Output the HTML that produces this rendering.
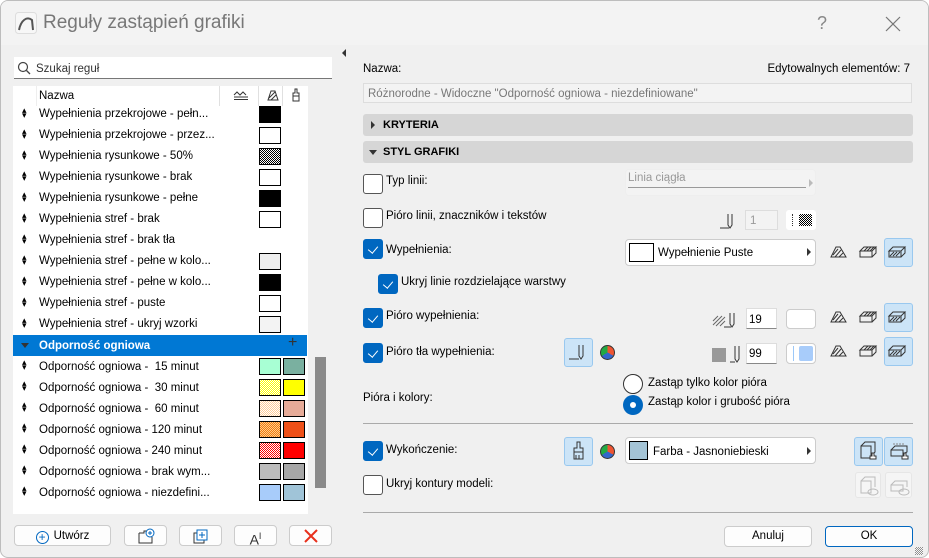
<!DOCTYPE html>
<html><head><meta charset="utf-8"><style>
*{box-sizing:border-box;margin:0;padding:0}
body{width:929px;height:558px;background:#fff;font-family:"Liberation Sans",sans-serif;font-size:11.5px;color:#000;position:relative;overflow:hidden}
.win{position:absolute;left:0;top:0;width:929px;height:558px;border:1px solid #bdbdbd;border-radius:8px;background:#f0f0f0;overflow:hidden}
.tb{position:absolute;left:0;top:0;width:929px;height:44px;background:#f3f3f3}
.a{position:absolute}
.t{position:absolute;white-space:nowrap;line-height:14px}
.sw{position:absolute;width:22px;height:17px;border:1px solid #000}
.cb{position:absolute;width:20px;height:20px;border:1px solid #555;border-radius:3px;background:#fff}
.cb.on{background:#0067c0;border-color:#0067c0}
.cb.on::after{content:"";position:absolute;left:6px;top:4px;width:5px;height:8px;border:solid #fff;border-width:0 1.2px 1.2px 0;transform:rotate(40deg)}
.bar{position:absolute;left:362px;width:550px;height:22px;background:#d6d6d6;border-radius:3px;font-weight:bold;font-size:11px}
.inp{position:absolute;background:#fff;border:1px solid #ddd;border-bottom:1px solid #888}
.bb{position:absolute;background:#cce4f7;border:1px solid #99c8ef;border-radius:3px}
.dd{position:absolute;background:#fff;border:1px solid #ccc;border-radius:4px}
.btn{position:absolute;background:#fdfdfd;border:1px solid #ccc;border-radius:4px;text-align:center;line-height:20px}
.arr{position:absolute;width:0;height:0;border-top:4px solid transparent;border-bottom:4px solid transparent;border-left:4px solid #333}
.ud{position:absolute;left:21px;width:6px;font-size:9px;line-height:5px;color:#000}
.chk{background:repeating-conic-gradient(#000 0 25%,#fff 0 50%) 0 0/2px 2px}
.sep{position:absolute;left:362px;width:550px;height:1px;background:#aaa}
.wheel{position:absolute;width:15px;height:15px;border-radius:50%;background:conic-gradient(#e53 0 33%,#36c 0 66%,#2a4 0);border:1px solid #333}
</style></head><body>
<div class="win">
<div class="tb"></div>
<svg class="a" style="left:14px;top:11px" width="22" height="22"><rect x=".5" y=".5" width="21" height="21" rx="3" fill="#f7f7f7" stroke="#ddd"/><path d="M4 18 C6 8 12 4 17 8 L18 18" fill="none" stroke="#555" stroke-width="2"/></svg>
<div class="t" style="left:42px;top:11px;font-size:19px;line-height:22px;color:#777">Reguły zastąpień grafiki</div>
<div class="t" style="left:816px;top:12px;font-size:18px;line-height:20px;color:#888">?</div>
<svg class="a" style="left:884px;top:15px" width="16" height="16"><path d="M1 1L15 15M15 1L1 15" stroke="#777" stroke-width="1.2"/></svg>

<div class="a" style="left:13px;top:56px;width:318px;height:22px;background:#fff;border-bottom:1px solid #777"></div>
<svg class="a" style="left:16px;top:60px" width="14" height="14"><circle cx="6" cy="6" r="4.5" fill="none" stroke="#444" stroke-width="1.2"/><path d="M9.5 9.5L13 13" stroke="#444" stroke-width="1.3"/></svg>
<div class="t" style="left:35px;top:61px;color:#333">Szukaj reguł</div>

<div class="a" style="left:12px;top:85px;width:295px;height:428px;background:#fff"></div>
<div class="a" style="left:35px;top:85px;width:270px;height:20px;border-left:1px solid #eee"></div>
<div class="a" style="left:218px;top:85px;width:1px;height:20px;background:#e0e0e0"></div>
<div class="a" style="left:257px;top:85px;width:1px;height:20px;background:#e0e0e0"></div>
<div class="a" style="left:281px;top:85px;width:1px;height:20px;background:#e0e0e0"></div>
<div class="t" style="left:38px;top:88px">Nazwa</div>
<svg class="a" style="left:232px;top:88px" width="16" height="12"><path d="M1 6L4 3 7 6 10 3 13 6M1 8H15M1 10.5H15" fill="none" stroke="#333"/></svg>
<svg class="a" style="left:265px;top:88px" width="14" height="13"><path d="M2 11L5 2H9L12 11Z M3 9L9 3M5 11L10 6" fill="none" stroke="#333"/></svg>
<svg class="a" style="left:290px;top:87px" width="10" height="14"><path d="M4 1h2v4h2v3H2V5h2zM2 8v5h6V8" fill="none" stroke="#333"/></svg>

<div class="ud" style="top:107px">▴<br>▾</div><div class="t" style="left:38px;top:106px">Wypełnienia przekrojowe - pełn...</div><div class="sw" style="left:258px;top:105px;background:#000"></div>
<div class="ud" style="top:128px">▴<br>▾</div><div class="t" style="left:38px;top:127px">Wypełnienia przekrojowe - przez...</div><div class="sw" style="left:258px;top:126px;background:#fff"></div>
<div class="ud" style="top:149px">▴<br>▾</div><div class="t" style="left:38px;top:148px">Wypełnienia rysunkowe - 50%</div><div class="sw chk" style="left:258px;top:147px"></div>
<div class="ud" style="top:170px">▴<br>▾</div><div class="t" style="left:38px;top:169px">Wypełnienia rysunkowe - brak</div><div class="sw" style="left:258px;top:168px;background:#fff"></div>
<div class="ud" style="top:191px">▴<br>▾</div><div class="t" style="left:38px;top:190px">Wypełnienia rysunkowe - pełne</div><div class="sw" style="left:258px;top:189px;background:#000"></div>
<div class="ud" style="top:212px">▴<br>▾</div><div class="t" style="left:38px;top:211px">Wypełnienia stref - brak</div><div class="sw" style="left:258px;top:210px;background:#fff"></div>
<div class="ud" style="top:233px">▴<br>▾</div><div class="t" style="left:38px;top:232px">Wypełnienia stref - brak tła</div>
<div class="ud" style="top:254px">▴<br>▾</div><div class="t" style="left:38px;top:253px">Wypełnienia stref - pełne w kolo...</div><div class="sw" style="left:258px;top:252px;background:#eee"></div>
<div class="ud" style="top:275px">▴<br>▾</div><div class="t" style="left:38px;top:274px">Wypełnienia stref - pełne w kolo...</div><div class="sw" style="left:258px;top:273px;background:#000"></div>
<div class="ud" style="top:296px">▴<br>▾</div><div class="t" style="left:38px;top:295px">Wypełnienia stref - puste</div><div class="sw" style="left:258px;top:294px;background:#fff"></div>
<div class="ud" style="top:317px">▴<br>▾</div><div class="t" style="left:38px;top:316px">Wypełnienia stref - ukryj wzorki</div><div class="sw" style="left:258px;top:315px;background:#f3f3f3"></div>

<div class="a" style="left:12px;top:334px;width:294px;height:21px;background:#0078d4"></div>
<div class="a" style="left:20px;top:342px;border-left:4px solid transparent;border-right:4px solid transparent;border-top:5px solid #333"></div>
<div class="t" style="left:38px;top:338px;color:#fff;font-weight:bold">Odporność ogniowa</div>
<div class="t" style="left:287px;top:335px;color:#333;font-size:16px">+</div>

<div class="ud" style="top:359px">▴<br>▾</div><div class="t" style="left:38px;top:359px">Odporność ogniowa - &nbsp;15 minut</div><div class="sw" style="left:258px;top:357px;background:#a8ffd4"></div><div class="sw" style="left:282px;top:357px;background:#7ab0a0"></div>
<div class="ud" style="top:380px">▴<br>▾</div><div class="t" style="left:38px;top:380px">Odporność ogniowa - &nbsp;30 minut</div><div class="sw" style="left:258px;top:378px;background:repeating-conic-gradient(#ff0 0 25%,#fff 0 50%) 0 0/2px 2px"></div><div class="sw" style="left:282px;top:378px;background:#ff0"></div>
<div class="ud" style="top:401px">▴<br>▾</div><div class="t" style="left:38px;top:401px">Odporność ogniowa - &nbsp;60 minut</div><div class="sw" style="left:258px;top:399px;background:repeating-conic-gradient(#fc9 0 25%,#fff 0 50%) 0 0/2px 2px"></div><div class="sw" style="left:282px;top:399px;background:#e6ab98"></div>
<div class="ud" style="top:422px">▴<br>▾</div><div class="t" style="left:38px;top:422px">Odporność ogniowa - 120 minut</div><div class="sw" style="left:258px;top:420px;background:repeating-conic-gradient(#f07a10 0 25%,#fc8 0 50%) 0 0/2px 2px"></div><div class="sw" style="left:282px;top:420px;background:#ee5018"></div>
<div class="ud" style="top:443px">▴<br>▾</div><div class="t" style="left:38px;top:443px">Odporność ogniowa - 240 minut</div><div class="sw" style="left:258px;top:441px;background:repeating-conic-gradient(#f00 0 25%,#fff 0 50%) 0 0/2px 2px"></div><div class="sw" style="left:282px;top:441px;background:#f00"></div>
<div class="ud" style="top:464px">▴<br>▾</div><div class="t" style="left:38px;top:464px">Odporność ogniowa - brak wym...</div><div class="sw" style="left:258px;top:462px;background:#bcbcbc"></div><div class="sw" style="left:282px;top:462px;background:#a6a6a6"></div>
<div class="ud" style="top:485px">▴<br>▾</div><div class="t" style="left:38px;top:485px">Odporność ogniowa - niezdefini...</div><div class="sw" style="left:258px;top:483px;background:#a8ccfa"></div><div class="sw" style="left:282px;top:483px;background:#a0c4d8"></div>

<div class="a" style="left:314px;top:356px;width:11px;height:131px;background:#8a8a8a"></div>

<div class="btn" style="left:13px;top:524px;width:97px;height:21px"><span style="display:inline-block;width:13px;height:13px;border:1px solid #0067c0;border-radius:50%;color:#0067c0;line-height:10px;font-size:12px;vertical-align:-2px;margin-right:5px">+</span>Utwórz</div>
<div class="btn" style="left:123px;top:524px;width:43px;height:21px"><svg width="18" height="16" style="margin-top:2px"><path d="M2 5H7V3H10M2 5V15H15V9" fill="none" stroke="#333"/><circle cx="13" cy="5" r="4" fill="#fff" stroke="#0067c0"/><path d="M13 3V7M11 5H15" stroke="#0067c0"/></svg></div>
<div class="btn" style="left:178px;top:524px;width:43px;height:21px"><svg width="18" height="16" style="margin-top:2px"><rect x="2" y="5" width="10" height="10" fill="none" stroke="#333"/><rect x="5" y="2" width="10" height="10" fill="#fff" stroke="#0067c0"/><path d="M10 4V10M7 7H13" stroke="#0067c0"/></svg></div>
<div class="btn" style="left:233px;top:524px;width:43px;height:21px;font-size:14px;color:#333">A<sup style="font-size:9px">I</sup></div>
<div class="btn" style="left:288px;top:524px;width:43px;height:21px"><svg width="14" height="14" style="margin-top:3px"><path d="M1 1L13 13M13 1L1 13" stroke="#e8301c" stroke-width="2"/></svg></div>

<div class="a" style="left:341px;top:48px;border-top:4px solid transparent;border-bottom:4px solid transparent;border-right:4px solid #333"></div>

<div class="t" style="left:362px;top:61px">Nazwa:</div>
<div class="t" style="right:18px;top:61px">Edytowalnych elementów: 7</div>
<div class="a" style="left:362px;top:82px;width:549px;height:20px;border:1px solid #ddd;background:#f3f3f3"></div>
<div class="t" style="left:367px;top:86px;color:#777">Różnorodne - Widoczne "Odporność ogniowa - niezdefiniowane"</div>
<div class="bar" style="top:113px"><div class="arr" style="left:8px;top:7px"></div><div class="t" style="left:20px;top:4px">KRYTERIA</div></div>
<div class="bar" style="top:140px"><div class="a" style="left:6px;top:9px;border-left:4px solid transparent;border-right:4px solid transparent;border-top:5px solid #333"></div><div class="t" style="left:20px;top:4px">STYL GRAFIKI</div></div>

<div class="cb" style="left:362px;top:173px"></div><div class="t" style="left:385px;top:173px">Typ linii:</div>
<div class="dd" style="left:624px;top:168px;width:191px;height:27px;background:#f3f3f3;border-color:#eee"></div>
<div class="t" style="left:627px;top:170px;color:#999">Linia ciągła</div>
<div class="a" style="left:627px;top:186px;width:178px;height:1px;background:#999"></div>
<div class="arr" style="left:808px;top:178px;border-left-color:#bbb"></div>

<div class="cb" style="left:362px;top:207px"></div><div class="t" style="left:385px;top:208px">Pióro linii, znaczników i tekstów</div>
<svg class="a" style="left:718px;top:211px" width="18" height="18"><path d="M1 16H10M9 2V13L11 16 13 13V2" fill="none" stroke="#333"/></svg>
<div class="a" style="left:744px;top:209px;width:33px;height:20px;border:1px solid #ddd;background:#f3f3f3"></div><div class="t" style="left:749px;top:213px;color:#999">1</div>
<div class="a" style="left:785px;top:209px;width:30px;height:20px;background:#fff;border-radius:3px"></div>
<div class="a" style="left:791px;top:213px;width:1px;height:12px;border-left:1px dotted #333"></div><div class="a chk" style="left:798px;top:213px;width:13px;height:12px"></div>

<div class="cb on" style="left:362px;top:238px"></div><div class="t" style="left:385px;top:242px">Wypełnienia:</div>
<div class="dd" style="left:624px;top:238px;width:191px;height:27px"></div>
<div class="a" style="left:628px;top:242px;width:25px;height:19px;border:1px solid #000;background:#fff"></div>
<div class="t" style="left:657px;top:245px">Wypełnienie Puste</div>
<div class="arr" style="left:806px;top:247px"></div>

<div class="cb on" style="left:377px;top:273px"></div><div class="t" style="left:400px;top:274px">Ukryj linie rozdzielające warstwy</div>

<div class="cb on" style="left:362px;top:307px"></div><div class="t" style="left:385px;top:308px">Pióro wypełnienia:</div>
<svg class="a" style="left:711px;top:310px" width="28" height="18"><path d="M1 10L6 5M1 14L10 5M4 15L13 6M8 15L13 10" stroke="#666"/><path d="M12 16H19M18 2V13L20 16 22 13V2" fill="none" stroke="#333"/></svg>
<div class="inp" style="left:745px;top:307px;width:31px;height:21px"></div><div class="t" style="left:748px;top:312px">19</div>
<div class="a" style="left:785px;top:308px;width:30px;height:20px;background:#fff;border:1px solid #ccc;border-radius:4px"></div>

<div class="cb on" style="left:362px;top:342px"></div><div class="t" style="left:385px;top:344px">Pióro tła wypełnienia:</div>
<div class="bb" style="left:563px;top:337px;width:29px;height:29px"></div>
<svg class="a" style="left:566px;top:342px" width="22" height="20"><path d="M2 16H12M12 2V13L14 16 16 13V2" fill="none" stroke="#333"/></svg>
<div class="wheel" style="left:599px;top:344px"></div>
<div class="a" style="left:711px;top:347px;width:14px;height:14px;background:#999"></div>
<svg class="a" style="left:728px;top:343px" width="12" height="20"><path d="M1 18H6M6 2V15L8 18 10 15V2" fill="none" stroke="#333"/></svg>
<div class="inp" style="left:745px;top:342px;width:31px;height:21px"></div><div class="t" style="left:748px;top:346px">99</div>
<div class="a" style="left:785px;top:342px;width:30px;height:21px;background:#fff;border:1px solid #ccc;border-radius:4px"></div>
<div class="a" style="left:792px;top:345px;width:1px;height:15px;background:#9cc8f8"></div>
<div class="a" style="left:798px;top:345px;width:14px;height:15px;background:#a8ccfa;border-radius:2px"></div>

<div class="bb" style="left:883px;top:237px;width:29px;height:29px"></div>
<div class="bb" style="left:883px;top:302px;width:29px;height:29px"></div>
<div class="bb" style="left:883px;top:336px;width:29px;height:29px"></div>
<svg class="a" style="left:827px;top:244px" width="88" height="118">
<defs><g id="i1"><path d="M2 12L7 2H11L17 12Z" fill="none" stroke="#333"/><path d="M4 10L9 4M6 12L12 5M10 12L14 8" stroke="#333"/></g>
<g id="i2"><path d="M2 6H14L18 2H6Z M2 6V12H14V6M14 12L18 8V2" fill="none" stroke="#333"/><path d="M6 6L10 2M9 6L13 2M12 6L16 2" stroke="#333"/></g>
<g id="i3"><path d="M2 6H14L18 2H6Z M2 6V12H14V6M14 12L18 8V2" fill="none" stroke="#333"/><path d="M3 11L7 7M6 11L10 7M9 11L13 7" stroke="#333"/></g></defs>
<use href="#i1" x="1" y="0"/><use href="#i2" x="30" y="0"/><use href="#i3" x="59" y="0"/>
<use href="#i1" x="1" y="65"/><use href="#i2" x="30" y="65"/><use href="#i3" x="59" y="65"/>
<use href="#i1" x="1" y="99"/><use href="#i2" x="30" y="99"/><use href="#i3" x="59" y="99"/>
</svg>

<div class="a" style="left:622px;top:373px;width:20px;height:20px;border:1px solid #333;border-radius:50%;background:#fff"></div>
<div class="t" style="left:647px;top:375px">Zastąp tylko kolor pióra</div>
<div class="a" style="left:622px;top:394px;width:20px;height:20px;border-radius:50%;background:#0067c0"></div>
<div class="a" style="left:629px;top:401px;width:6px;height:6px;border-radius:50%;background:#fff"></div>
<div class="t" style="left:647px;top:394px">Zastąp kolor i grubość pióra</div>
<div class="t" style="left:362px;top:390px">Pióra i kolory:</div>

<div class="sep" style="top:422px"></div>

<div class="cb on" style="left:362px;top:440px"></div><div class="t" style="left:385px;top:442px">Wykończenie:</div>
<div class="bb" style="left:563px;top:436px;width:29px;height:29px"></div>
<svg class="a" style="left:570px;top:440px" width="16" height="20"><path d="M6 1h3v6h3v4H3V7h3zM3 11v7h9v-7M5 14v4M8 14v4" fill="none" stroke="#333"/></svg>
<div class="wheel" style="left:599px;top:443px"></div>
<div class="dd" style="left:624px;top:436px;width:191px;height:27px"></div>
<div class="a" style="left:628px;top:440px;width:19px;height:19px;border:1px solid #000;background:#a4c4d6"></div>
<div class="t" style="left:652px;top:444px">Farba - Jasnoniebieski</div>
<div class="arr" style="left:806px;top:446px"></div>
<div class="bb" style="left:853px;top:436px;width:29px;height:29px"></div>
<div class="bb" style="left:883px;top:436px;width:29px;height:29px"></div>
<svg class="a" style="left:856px;top:439px" width="54" height="24"><path d="M4 6H14V18H4ZM4 6L8 2H18V12L14 16" fill="none" stroke="#333"/><path d="M15 13h2v3h2v3h-6v-3h2z" fill="#fff" stroke="#333"/>
<path d="M34 10H46V16H34ZM34 10L38 6H50V12L46 14" fill="none" stroke="#333"/><path d="M36 4H48" stroke="#888" stroke-dasharray="2 1"/><path d="M47 13h2v3h2v3h-6v-3h2z" fill="#fff" stroke="#333"/></svg>

<div class="cb" style="left:362px;top:474px"></div><div class="t" style="left:385px;top:476px">Ukryj kontury modeli:</div>
<div class="a" style="left:854px;top:471px;width:26px;height:26px;border:1px solid #e6e6e6;border-radius:3px;background:#f5f5f5"></div>
<div class="a" style="left:884px;top:471px;width:27px;height:26px;border:1px solid #e6e6e6;border-radius:3px;background:#f5f5f5"></div>
<svg class="a" style="left:856px;top:474px" width="54" height="22"><path d="M4 6H14V18H4ZM4 6L8 2H18V12" fill="none" stroke="#bbb"/><ellipse cx="16" cy="17" rx="5" ry="3" fill="none" stroke="#bbb"/><path d="M34 10H46V16H34ZM34 10L38 6H50V12" fill="none" stroke="#bbb"/><ellipse cx="47" cy="17" rx="5" ry="3" fill="none" stroke="#bbb"/></svg>

<div class="sep" style="top:511px"></div>
<div class="btn" style="left:723px;top:525px;width:88px;height:21px;line-height:19px">Anuluj</div>
<div class="btn" style="left:824px;top:525px;width:88px;height:21px;line-height:19px;border-color:#0067c0">OK</div>
<div class="a chk" style="left:914px;top:546px;width:8px;height:8px;opacity:.4"></div>
</div>
</body></html>
